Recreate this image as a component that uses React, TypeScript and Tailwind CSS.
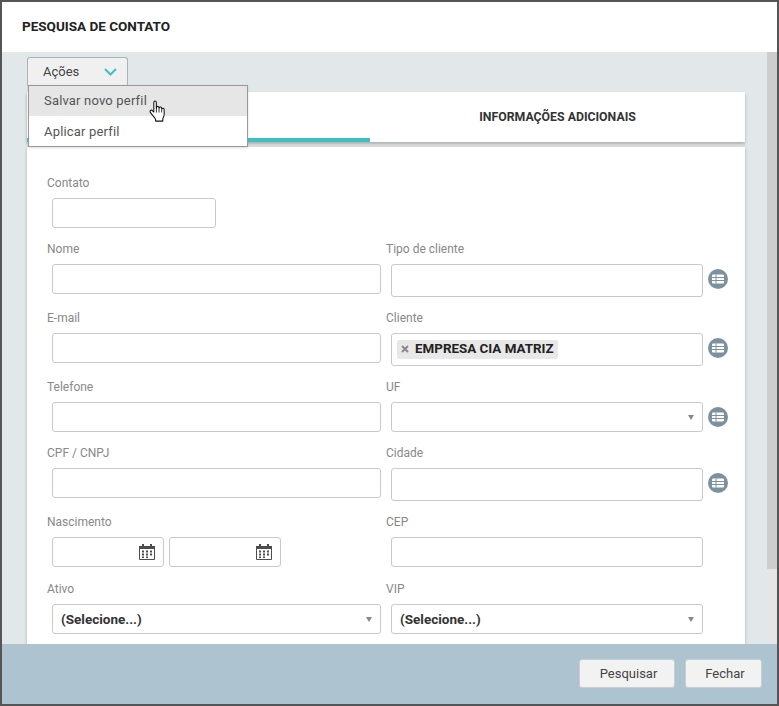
import type { ReactNode } from "react";

const inputBox = "rounded-[3px] border border-[#c9c9c9] bg-white";

function ListIcon() {
  return (
    <svg width="20" height="20" viewBox="0 0 20 20" className="mt-[5px] shrink-0">
      <circle cx="10" cy="10" r="10" fill="#7c919e" />
      <rect x="4" y="5.500" width="12" height="9" rx="1.2" fill="#fff" />
      <path d="M4 8.500h12M4 11.500h12M8 5.500v9" stroke="#7c919e" strokeWidth="1" />
    </svg>
  );
}

function CalendarIcon() {
  return (
    <svg width="16" height="16" viewBox="0 0 16 16" className="shrink-0">
      <path d="M0.500 2.500h15v13h-15z" fill="#fff" stroke="#4d4d4d" />
      <rect x="0" y="2" width="16" height="3" fill="#4d4d4d" />
      <rect x="3" y="0" width="2" height="3" fill="#4d4d4d" />
      <rect x="11" y="0" width="2" height="3" fill="#4d4d4d" />
      <path
        d="M3 6.500h2v2H3zM7 6.500h2v2H7zM11 6.500h2v2h-2zM3 9.500h2v2H3zM7 9.500h2v2H7zM11 9.500h2v2h-2zM3 12.500h2v1.500H3zM7 12.500h2v1.500H7z"
        fill="#4d4d4d"
      />
    </svg>
  );
}

function HandCursor() {
  return (
    <svg width="18" height="23" viewBox="0 0 17 22" className="absolute left-[120px] top-[14px]">
      <path
        d="M4.500 2.200c0-1.600 2.400-1.600 2.400 0v6l.2-1.200c.3-1.300 2.200-1.100 2.300.2l.1 1 .2-.7c.4-1.200 2.200-1 2.300.3l.1 1 .2-.4c.6-1 2.100-.5 2.100.7v4.600c0 2-.8 3-1.300 4.200v2.300H6.200v-1.800C5 16.500 2.600 13.800 1.200 11.800c-.9-1.300.7-2.800 1.900-1.700l1.400 1.400z"
        fill="#fff"
        stroke="#111"
        strokeWidth="1"
        strokeLinejoin="round"
      />
      <path d="M7 8v4M9.500 8.500V12M12 9v3" stroke="#111" strokeWidth="0.8" />
    </svg>
  );
}

function SelectBox({ value }: { value?: string }) {
  return (
    <div className={`${inputBox} flex h-[30px] items-center justify-between pl-2 pr-2 text-[13.5px] font-bold text-[#333]`}>
      <span className="pt-[1px]">{value}</span>
      <span className="h-0 w-0 border-x-[3.5px] border-t-[5px] border-x-transparent border-t-[#888]" />
    </div>
  );
}

function Field({ label, children }: { label: string; children: ReactNode }) {
  return (
    <div>
      <div className="flex h-[23px] items-start text-xs leading-[16px] text-[#888]">{label}</div>
      {children}
    </div>
  );
}

function Left({ label, children }: { label: string; children?: ReactNode }) {
  return (
    <Field label={label}>
      <div className="pl-[5px] pr-[5px]">{children ?? <div className={`${inputBox} h-[30px]`} />}</div>
    </Field>
  );
}

function Right({ label, children, tall, icon }: { label: string; children?: ReactNode; tall?: boolean; icon?: boolean }) {
  return (
    <Field label={label}>
      <div className="flex items-start gap-[5px] pl-[5px]">
        <div className="w-[312px]">
          {children ?? <div className={`${inputBox} ${tall ? "h-[33px]" : "h-[30px]"}`} />}
        </div>
        {icon && <ListIcon />}
      </div>
    </Field>
  );
}

const rowClass = "grid grid-cols-[339px_1fr] items-start";

export default function App() {
  return (
    <div className="flex h-[706px] w-[779px] flex-col overflow-hidden border-2 border-[#555] bg-white font-['Roboto',sans-serif]">
      <header className="flex h-[50px] shrink-0 items-center pb-[1px] pl-5 text-[13.5px] font-bold text-[#222]">
        PESQUISA DE CONTATO
      </header>

      <div className="flex min-h-0 flex-1">
        <main className="min-w-0 flex-1 overflow-hidden bg-[#e2e7ea] pl-[25px] pr-[22px] pt-[5px]">
          <div className="relative w-[101px]">
            <button className="flex h-[29px] w-full items-center justify-between rounded-t-[3px] border border-b-0 border-[#aab3b8] bg-[#f0f0f0] pl-[15px] pr-[10px] text-[13px] text-[#444]">
              Ações
              <svg width="13" height="8" viewBox="0 0 13 8">
                <path d="M1 1l5.500 5.500L12 1" fill="none" stroke="#3fc1c3" strokeWidth="2" />
              </svg>
            </button>
            <div className="absolute left-[1px] top-[28px] z-10 w-[220px] border border-[#999] bg-white text-[13px] tracking-[0.18px] text-[#555] shadow-sm">
              <div className="relative flex h-[30px] items-center bg-[#e6e6e6] pl-[15px]">
                Salvar novo perfil
                <HandCursor />
              </div>
              <div className="flex h-[30px] items-center pl-[15px] pt-[1px]">Aplicar perfil</div>
            </div>
          </div>

          <div className="mt-[6px] flex h-[50px] bg-white shadow-[0_2px_3px_rgba(0,0,0,0.25)]">
            <div className="w-[343px] border-b-4 border-[#3fc1c3]" />
            <div className="flex flex-1 items-center justify-center text-[12.3px] font-bold text-[#333]">
              INFORMAÇÕES ADICIONAIS
            </div>
          </div>

          <section className="mt-[5px] h-[520px] bg-white pl-5 pt-7 shadow-[0_1px_3px_rgba(0,0,0,0.25)]">
            <div className="h-[66px]">
              <Field label="Contato">
                <div className={`${inputBox} ml-[5px] h-[30px] w-[164px]`} />
              </Field>
            </div>
            <div className={`${rowClass} h-[69px]`}>
              <Left label="Nome" />
              <Right label="Tipo de cliente" tall icon />
            </div>
            <div className={`${rowClass} h-[69px]`}>
              <Left label="E-mail" />
              <Right label="Cliente" icon>
                <div className={`${inputBox} flex h-[33px] items-center pb-[1px] pl-[5px]`}>
                  <div className="flex h-[19px] items-center gap-[6px] rounded-[2px] bg-[#e8e8e8] pl-[4px] pr-1 text-[13.4px] font-bold text-[#222]">
                    <svg width="8" height="8" viewBox="0 0 8 8">
                      <path d="M1 1l6 6M7 1L1 7" stroke="#888" strokeWidth="2" />
                    </svg>
                    EMPRESA CIA MATRIZ
                  </div>
                </div>
              </Right>
            </div>
            <div className={`${rowClass} h-[66px]`}>
              <Left label="Telefone" />
              <Right label="UF" icon>
                <SelectBox />
              </Right>
            </div>
            <div className={`${rowClass} h-[69px]`}>
              <Left label="CPF / CNPJ" />
              <Right label="Cidade" tall icon />
            </div>
            <div className={`${rowClass} h-[67px]`}>
              <Left label="Nascimento">
                <div className="flex gap-[5px]">
                  <div className={`${inputBox} flex h-[30px] w-[112px] items-center justify-end pr-[8px]`}>
                    <CalendarIcon />
                  </div>
                  <div className={`${inputBox} flex h-[30px] w-[112px] items-center justify-end pr-[8px]`}>
                    <CalendarIcon />
                  </div>
                </div>
              </Left>
              <Right label="CEP" />
            </div>
            <div className={rowClass}>
              <Left label="Ativo">
                <SelectBox value="(Selecione...)" />
              </Left>
              <Right label="VIP">
                <SelectBox value="(Selecione...)" />
              </Right>
            </div>
          </section>
        </main>

        <div className="w-[10px] shrink-0 bg-[#e6e6e6]">
          <div className="h-[517px] bg-[#cdcdcd]" />
        </div>
      </div>

      <footer className="flex h-[60px] shrink-0 items-start justify-end gap-[10px] bg-[#adc3d0] pr-[15px] pt-[15px]">
        <button className="h-[29px] w-[96px] rounded-[3px] border border-[#c5ced4] bg-[#f2f2f2] pl-[3px] text-[13px] text-[#444]">
          Pesquisar
        </button>
        <button className="h-[29px] w-[77px] rounded-[3px] border border-[#c5ced4] bg-[#f2f2f2] pl-[3px] text-[13px] text-[#444]">
          Fechar
        </button>
      </footer>
    </div>
  );
}
